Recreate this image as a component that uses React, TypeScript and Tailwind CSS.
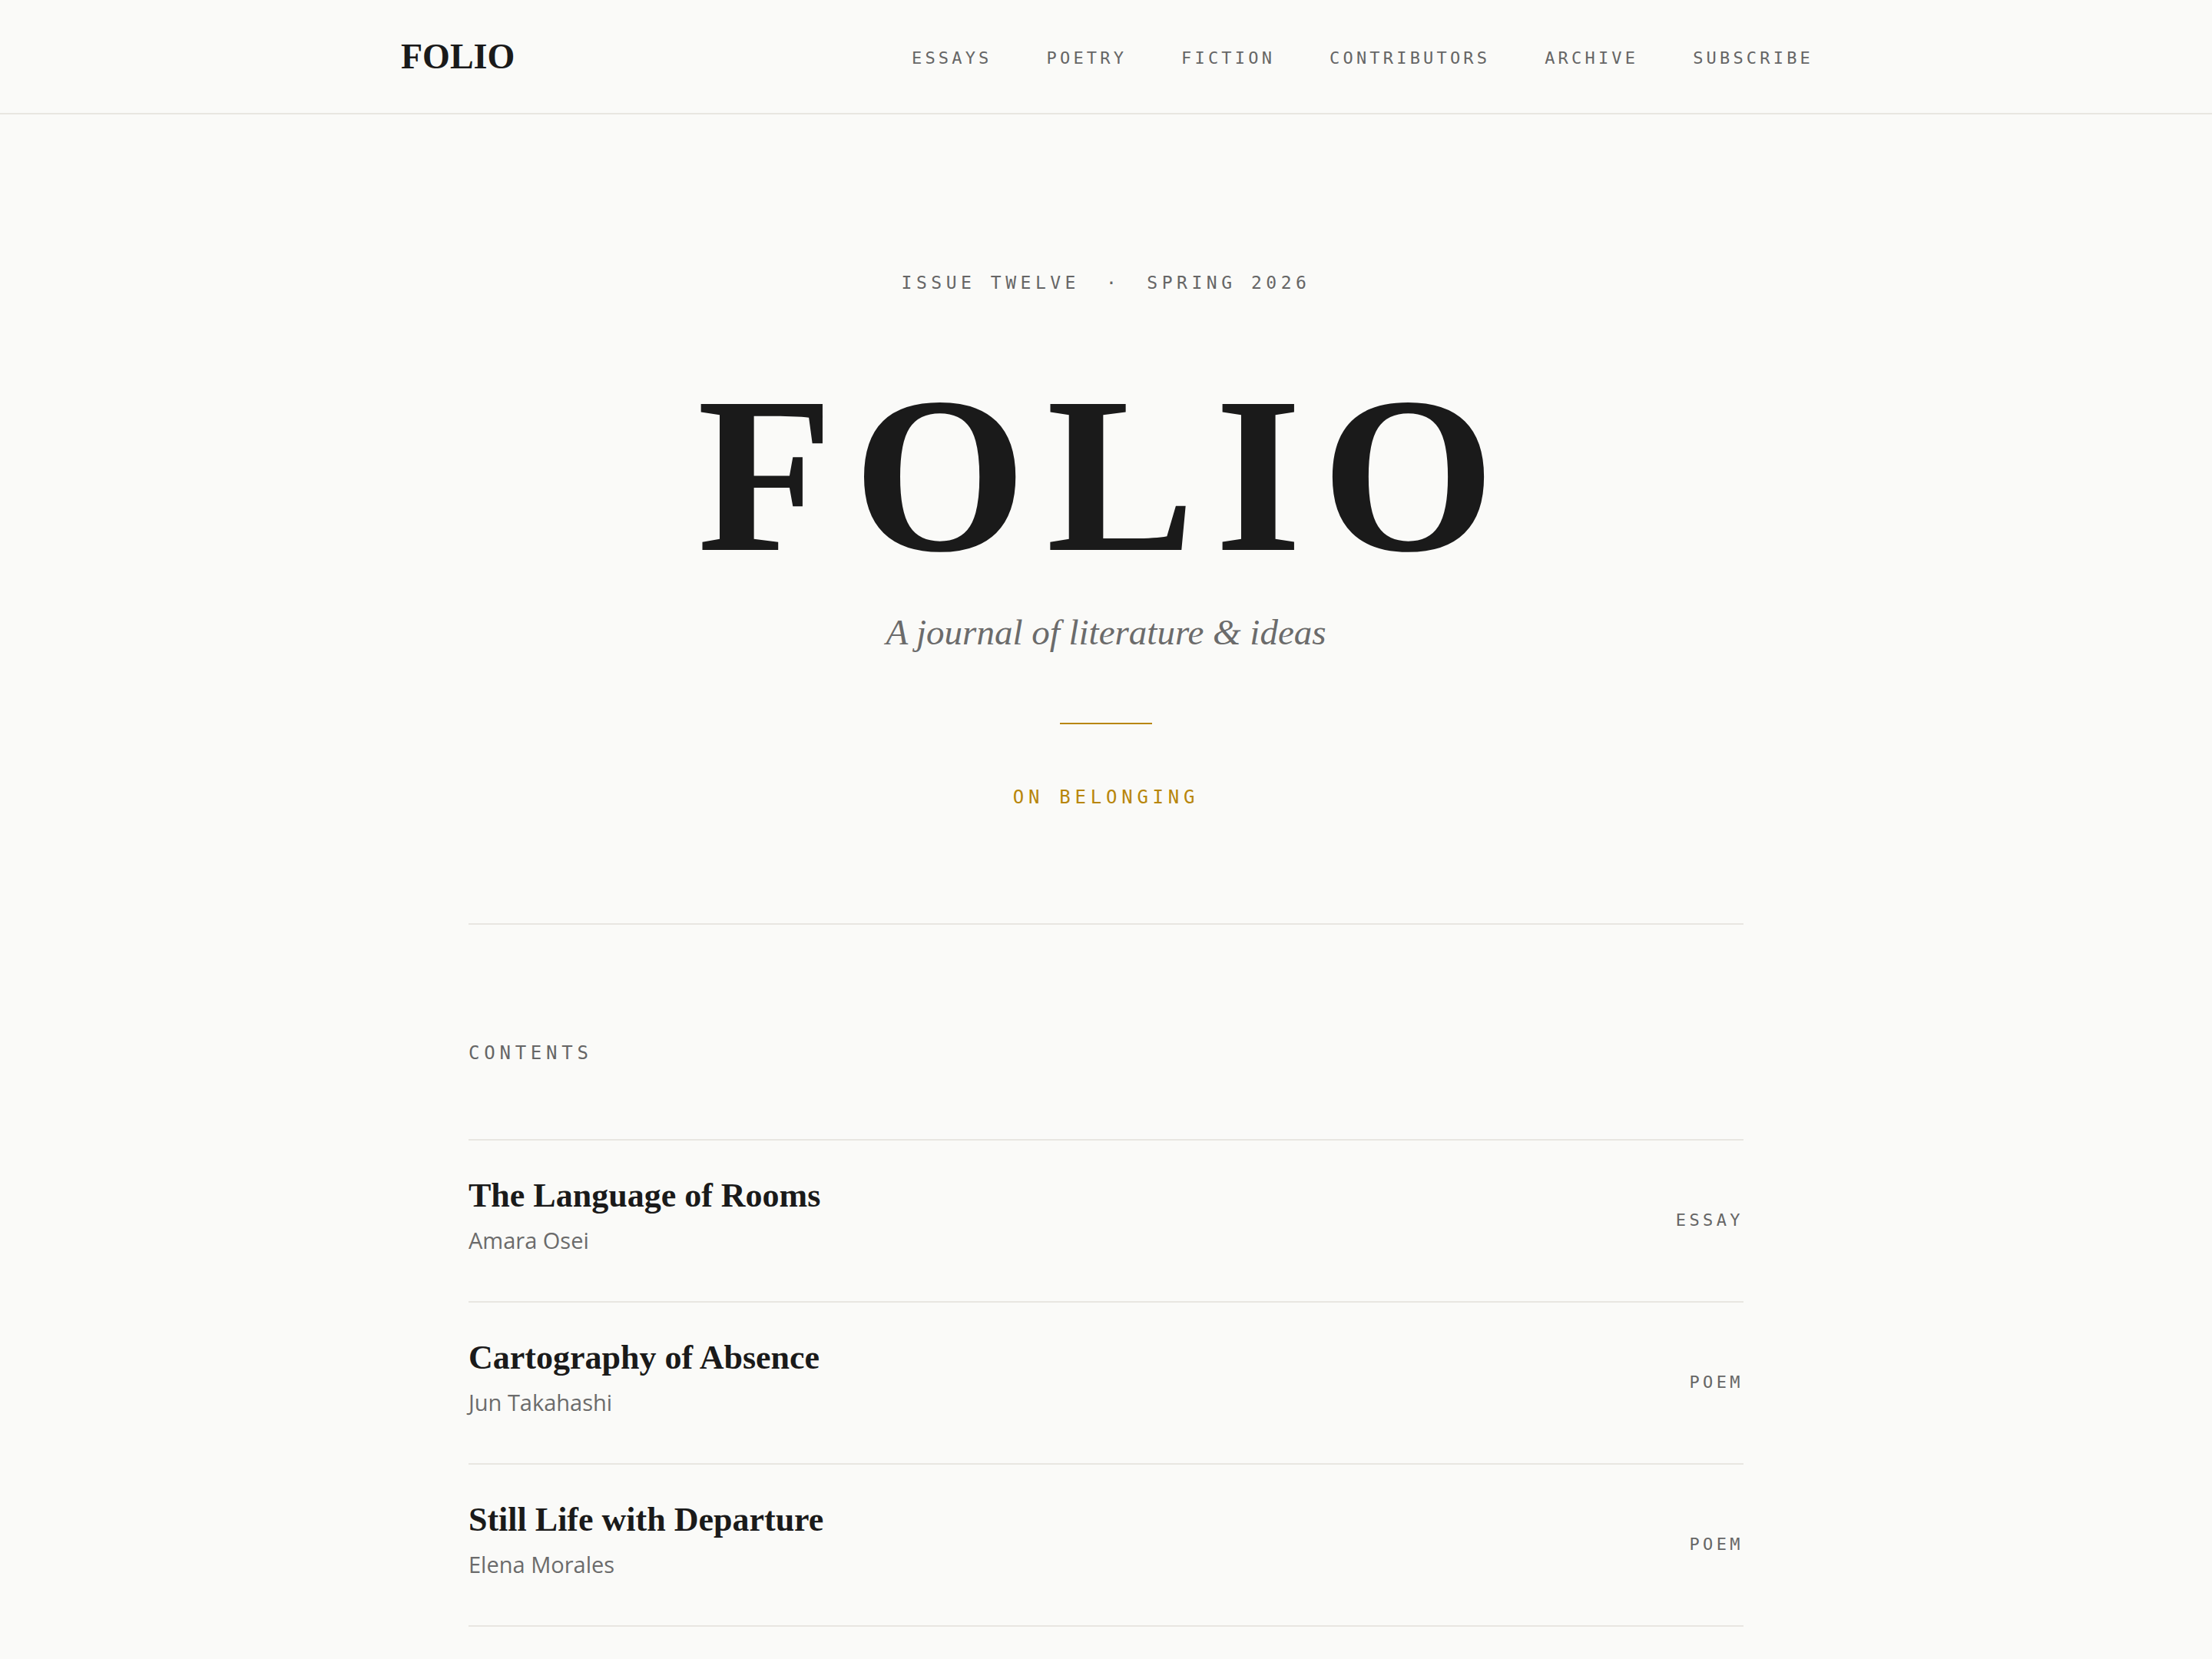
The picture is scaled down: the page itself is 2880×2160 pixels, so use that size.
import React from "react";

const navItems = ["ESSAYS", "POETRY", "FICTION", "CONTRIBUTORS", "ARCHIVE", "SUBSCRIBE"];

const entries = [
  { title: "The Language of Rooms", author: "Amara Osei", kind: "ESSAY" },
  { title: "Cartography of Absence", author: "Jun Takahashi", kind: "POEM" },
  { title: "Still Life with Departure", author: "Elena Morales", kind: "POEM" },
];

export default function App() {
  return (
    <div className="min-h-screen bg-[#fafaf8] text-[#1a1a1a]">
      <header className="border-b-2 border-[#e8e6e1]">
        <div className="mx-auto flex h-[147px] max-w-[1836px] items-center justify-between">
          <div className="font-['Liberation_Serif',serif] text-[46px] font-bold leading-none text-[#1a1a1a]">
            FOLIO
          </div>
          <nav className="-mr-[3px] flex gap-[71px] pt-[5px] font-['DejaVu_Sans_Mono',monospace] text-[22px] leading-[28px] tracking-[0.19em] text-[#666666]">
            {navItems.map((n) => (
              <a key={n} href="#">
                {n}
              </a>
            ))}
          </nav>
        </div>
      </header>

      <section className="flex flex-col items-center pt-[204px]">
        <p className="font-['DejaVu_Sans_Mono',monospace] text-[23px] leading-[30px] tracking-[0.24em] text-[#666666]">
          ISSUE TWELVE<span className="mx-[34px]">·</span>SPRING 2026
        </p>
        <h1 className="mt-[91px] font-['Liberation_Serif',serif] text-[290px] font-bold leading-[290px] tracking-[26px] text-[#1a1a1a]">
          FOLIO
        </h1>
        <p className="mt-[29px] font-['Liberation_Serif',serif] text-[47px] italic leading-[60px] text-[#6b6b6b]">
          A journal of literature &amp; ideas
        </p>
        <div className="mt-[88px] h-[2px] w-[120px] bg-[#b8860b]" />
        <p className="mt-[79px] font-['DejaVu_Sans_Mono',monospace] text-[24px] leading-[32px] tracking-[0.24em] text-[#b8860b]">
          ON BELONGING
        </p>
      </section>

      <section className="mx-auto mt-[148px] max-w-[1660px] border-t-2 border-[#e8e6e1]">
        <h2 className="mt-[151px] font-['DejaVu_Sans_Mono',monospace] text-[24px] font-normal leading-[32px] tracking-[0.24em] text-[#666666]">
          CONTENTS
        </h2>
        <ul className="mt-[96px] border-b-2 border-[#e8e6e1]">
          {entries.map((e) => (
            <li
              key={e.title}
              className="flex items-center justify-between border-t-2 border-[#e8e6e1] pb-[59px] pt-[44px]"
            >
              <div className="flex flex-col">
                <span className="font-['Liberation_Serif',serif] text-[44px] font-bold leading-[56px] text-[#1a1a1a]">
                  {e.title}
                </span>
                <span className="mt-[10px] font-['Open_Sans',sans-serif] text-[29px] leading-[40px] text-[#6b6b6b]">
                  {e.author}
                </span>
              </div>
              <span className="mt-[14px] font-['DejaVu_Sans_Mono',monospace] text-[22px] leading-[28px] tracking-[0.2em] text-[#666666]">
                {e.kind}
              </span>
            </li>
          ))}
        </ul>
      </section>
    </div>
  );
}
